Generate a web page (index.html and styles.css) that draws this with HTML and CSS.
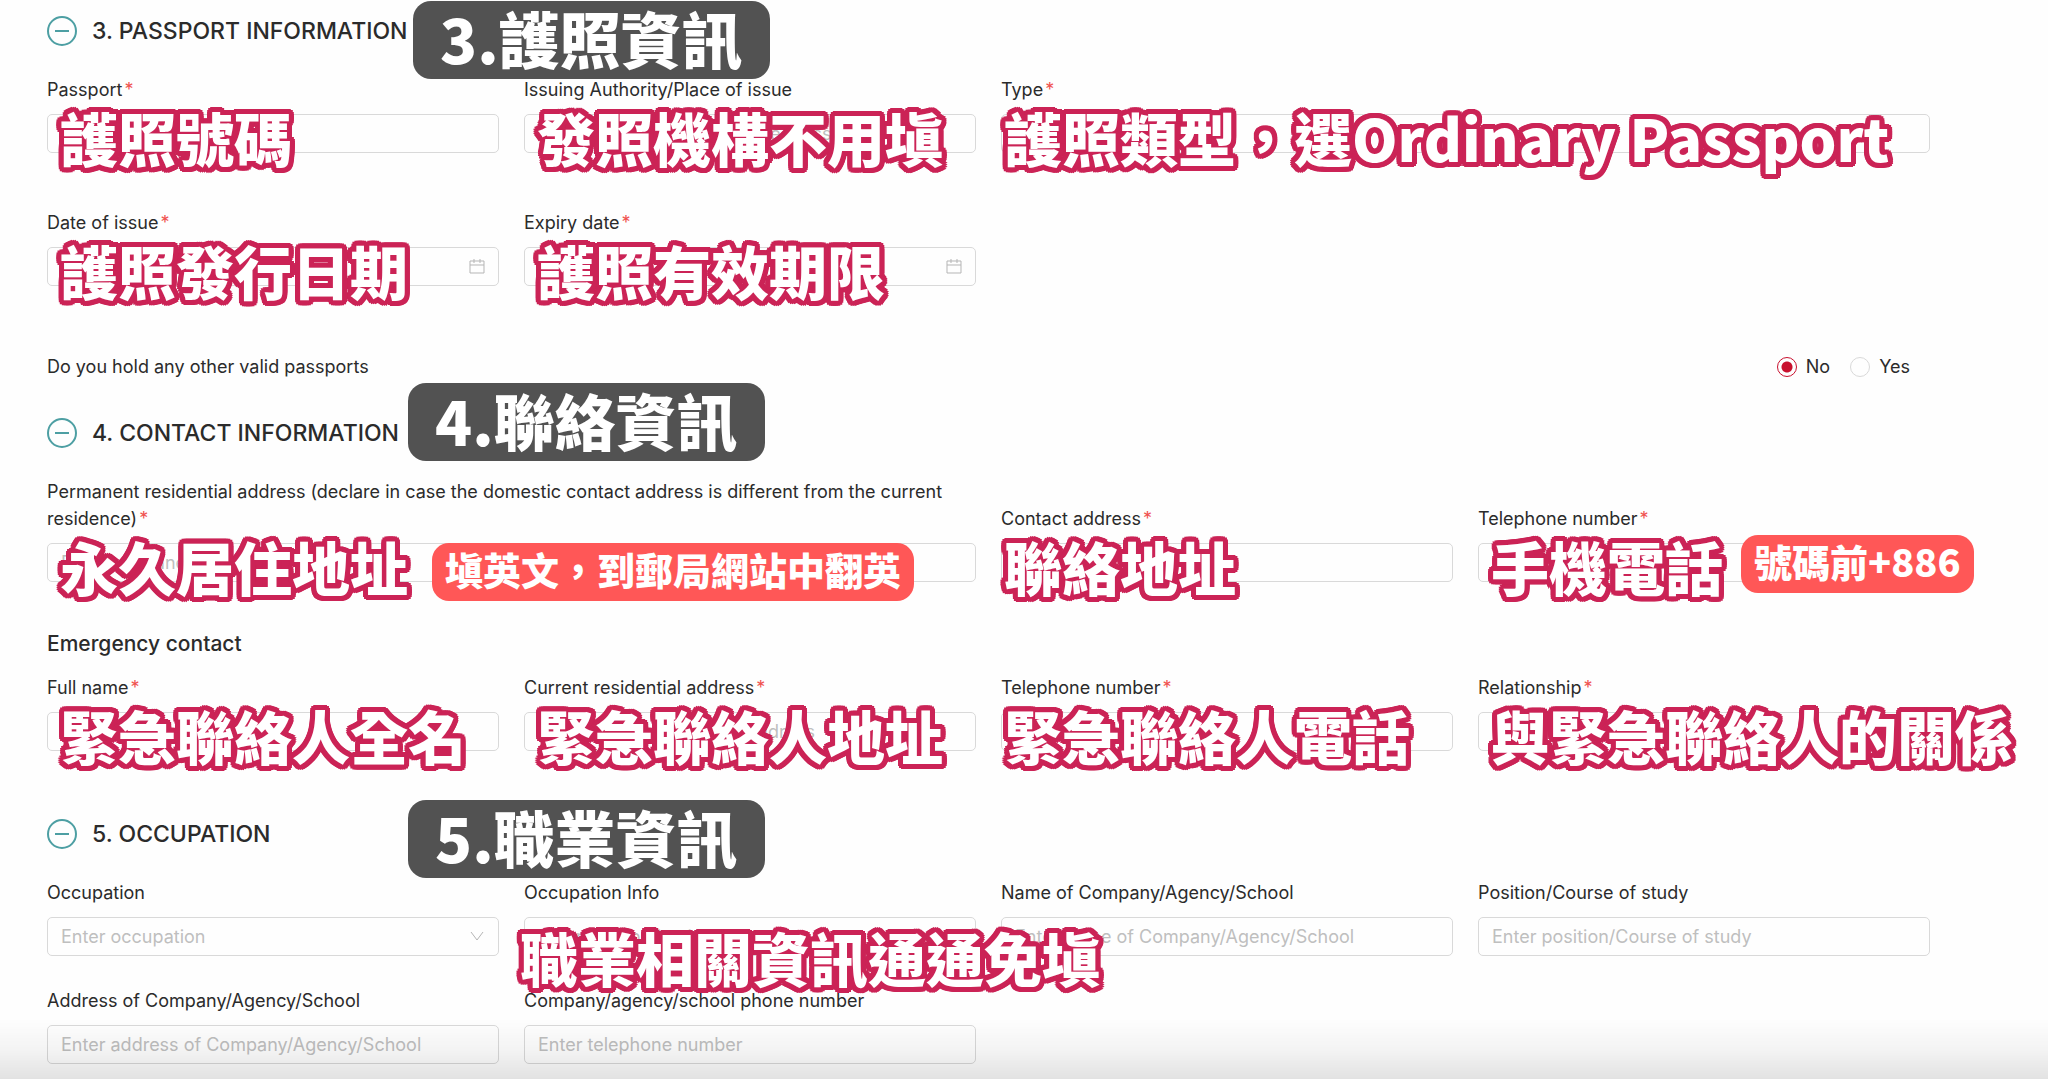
FILE: index.html
```
<!DOCTYPE html>
<html lang="en">
<head>
    <meta charset="UTF-8">
    <meta name="viewport" content="width=device-width, initial-scale=1.0">
    <title>Passport, contact and occupation</title>
    <link rel="stylesheet" href="styles.css">
</head>
<body>
    <form class="form">
        <!-- 3. Passport -->
        <section class="section">
            <div class="section-head">
                <button type="button" class="toggle" aria-label="Collapse passport information">
                    <svg viewBox="0 0 30 30"><circle cx="15" cy="15" r="14"/><path d="M8 15h14"/></svg>
                </button>
                <h2>3. PASSPORT INFORMATION</h2>
                <span class="badge badge-passport" lang="zh-Hant">3.護照資訊</span>
            </div>
            <div class="grid grid-loose">
                <div class="field">
                    <label for="passport">Passport<i>*</i></label>
                    <div class="control">
                        <input type="text" id="passport">
                        <span class="note" lang="zh-Hant">護照號碼</span>
                    </div>
                </div>
                <div class="field">
                    <label for="authority">Issuing Authority/Place of issue</label>
                    <div class="control">
                        <input type="text" id="authority" placeholder="Enter issuing authority/Place of issue">
                        <span class="note" lang="zh-Hant">發照機構不用塡</span>
                    </div>
                </div>
                <div class="field wide">
                    <label for="type">Type<i>*</i></label>
                    <div class="control">
                        <input type="text" id="type">
                        <span class="note note-left" lang="zh-Hant">護照類型，選Ordinary Passport</span>
                    </div>
                </div>
                <div class="field">
                    <label for="issued">Date of issue<i>*</i></label>
                    <div class="control">
                        <input type="text" id="issued">
                        <svg class="icon" viewBox="0 0 16 16"><path d="M1 3h14v12H1zM1 7h14M5 1v4M11 1v4"/></svg>
                        <span class="note" lang="zh-Hant">護照發行日期</span>
                    </div>
                </div>
                <div class="field">
                    <label for="expiry">Expiry date<i>*</i></label>
                    <div class="control">
                        <input type="text" id="expiry">
                        <svg class="icon" viewBox="0 0 16 16"><path d="M1 3h14v12H1zM1 7h14M5 1v4M11 1v4"/></svg>
                        <span class="note" lang="zh-Hant">護照有效期限</span>
                    </div>
                </div>
            </div>
            <div class="question" role="radiogroup" aria-labelledby="other-passports">
                <span id="other-passports">Do you hold any other valid passports</span>
                <div class="choices">
                    <label><input type="radio" name="other" checked>No</label>
                    <label><input type="radio" name="other">Yes</label>
                </div>
            </div>
        </section>

        <!-- 4. Contact -->
        <section class="section section-contact">
            <div class="section-head">
                <button type="button" class="toggle" aria-label="Collapse contact information">
                    <svg viewBox="0 0 30 30"><circle cx="15" cy="15" r="14"/><path d="M8 15h14"/></svg>
                </button>
                <h2>4. CONTACT INFORMATION</h2>
                <span class="badge badge-contact" lang="zh-Hant">4.聯絡資訊</span>
            </div>
            <div class="grid">
                <div class="field wide">
                    <label for="address">Permanent residential address (declare in case the domestic contact address is different from the current residence)<i>*</i></label>
                    <div class="control">
                        <input type="text" id="address" placeholder="Enter permanent address">
                        <span class="note" lang="zh-Hant">永久居住地址</span>
                        <span class="tip tip-address" lang="zh-Hant">塡英文，到郵局網站中翻英</span>
                    </div>
                </div>
                <div class="field">
                    <label for="contact">Contact address<i>*</i></label>
                    <div class="control">
                        <input type="text" id="contact">
                        <span class="note note-left" lang="zh-Hant">聯絡地址</span>
                    </div>
                </div>
                <div class="field">
                    <label for="phone">Telephone number<i>*</i></label>
                    <div class="control">
                        <input type="tel" id="phone">
                        <span class="note" lang="zh-Hant">手機電話</span>
                        <span class="tip tip-phone" lang="zh-Hant">號碼前+886</span>
                    </div>
                </div>
            </div>
            <h3>Emergency contact</h3>
            <div class="grid">
                <div class="field">
                    <label for="em-name">Full name<i>*</i></label>
                    <div class="control">
                        <input type="text" id="em-name">
                        <span class="note" lang="zh-Hant">緊急聯絡人全名</span>
                    </div>
                </div>
                <div class="field">
                    <label for="em-address">Current residential address<i>*</i></label>
                    <div class="control">
                        <input type="text" id="em-address" placeholder="Enter current residential address">
                        <span class="note" lang="zh-Hant">緊急聯絡人地址</span>
                    </div>
                </div>
                <div class="field">
                    <label for="em-phone">Telephone number<i>*</i></label>
                    <div class="control">
                        <input type="tel" id="em-phone">
                        <span class="note note-left" lang="zh-Hant">緊急聯絡人電話</span>
                    </div>
                </div>
                <div class="field">
                    <label for="em-relation">Relationship<i>*</i></label>
                    <div class="control">
                        <input type="text" id="em-relation">
                        <span class="note" lang="zh-Hant">與緊急聯絡人的關係</span>
                    </div>
                </div>
            </div>
        </section>

        <!-- 5. Occupation -->
        <section class="section section-occupation">
            <div class="section-head">
                <button type="button" class="toggle" aria-label="Collapse occupation">
                    <svg viewBox="0 0 30 30"><circle cx="15" cy="15" r="14"/><path d="M8 15h14"/></svg>
                </button>
                <h2>5. OCCUPATION</h2>
                <span class="badge badge-occupation" lang="zh-Hant">5.職業資訊</span>
            </div>
            <div class="grid">
                <div class="field">
                    <label for="occupation">Occupation</label>
                    <div class="control">
                        <select id="occupation"><option>Enter occupation</option></select>
                        <svg class="icon" viewBox="0 0 16 16"><path d="M2 4l6 8 6-8"/></svg>
                    </div>
                </div>
                <div class="field">
                    <label for="occupation-info">Occupation Info</label>
                    <div class="control">
                        <input type="text" id="occupation-info" placeholder="Enter occupation info">
                        <span class="note note-occupation" lang="zh-Hant">職業相關資訊通通免塡</span>
                    </div>
                </div>
                <div class="field">
                    <label for="company">Name of Company/Agency/School</label>
                    <div class="control">
                        <input type="text" id="company" placeholder="Enter name of Company/Agency/School">
                    </div>
                </div>
                <div class="field">
                    <label for="position">Position/Course of study</label>
                    <div class="control">
                        <input type="text" id="position" placeholder="Enter position/Course of study">
                    </div>
                </div>
                <div class="field">
                    <label for="company-address">Address of Company/Agency/School</label>
                    <div class="control">
                        <input type="text" id="company-address" placeholder="Enter address of Company/Agency/School">
                    </div>
                </div>
                <div class="field">
                    <label for="company-phone">Company/agency/school phone number</label>
                    <div class="control">
                        <input type="tel" id="company-phone" placeholder="Enter telephone number">
                    </div>
                </div>
            </div>
        </section>
    </form>
    <div class="shade"></div>
</body>
</html>
```
FILE: styles.css
```
* {
    box-sizing: border-box;
}

body {
    margin: 0;
    background: #fefefe;
    color: #2b2b2b;
    font-family: Inter, "Noto Sans CJK TC", sans-serif;
    font-size: 18px;
    line-height: 27px;
    overflow-x: hidden;
}

.form {
    padding: 16px 118px 18px 47px;
}

/* Section titles */
.section-head {
    position: relative;
    display: flex;
    align-items: center;
    gap: 15px;
    height: 30px;
    margin-bottom: 30px;
}

.section-contact {
    margin-top: 38px;
}

.section-occupation {
    margin-top: 68px;
}

h2 {
    margin: 0;
    font-size: 23px;
    font-weight: 500;
}

h3 {
    margin: 48px 0 17px;
    font-size: 21px;
    font-weight: 500;
    line-height: 27px;
}

.toggle {
    width: 30px;
    height: 30px;
    padding: 0;
    border: 0;
    background: none;
}

.toggle svg {
    display: block;
    fill: none;
    stroke: #4d9fa3;
    stroke-width: 2;
}

/* Fields */
.grid {
    display: grid;
    grid-template-columns: repeat(4, 1fr);
    align-items: end;
    gap: 31px 25px;
}

.grid-loose {
    row-gap: 56px;
}

.wide {
    grid-column: span 2;
}

.field label {
    display: block;
    margin-bottom: 11px;
}

.field i {
    margin-left: 2px;
    color: #f0524f;
    font-style: normal;
}

.control {
    position: relative;
}

.control input,
.control select {
    display: block;
    width: 100%;
    height: 39px;
    padding: 0 13px;
    border: 1px solid #d9d9d9;
    border-radius: 5px;
    background: transparent;
    color: #2b2b2b;
    font: inherit;
    appearance: none;
}

.control select,
.control input::placeholder {
    color: #bfbfbf;
    opacity: 1;
}

.icon {
    position: absolute;
    top: 11px;
    right: 14px;
    width: 16px;
    height: 16px;
    fill: none;
    stroke: #b5b5b5;
}

.question {
    display: flex;
    justify-content: space-between;
    margin-top: 67px;
    padding-right: 20px;
}

.choices {
    display: flex;
    gap: 20px;
}

.choices label {
    display: flex;
    align-items: center;
    gap: 9px;
}

.choices input {
    width: 20px;
    height: 20px;
    margin: 0;
    border: 1px solid #d9d9d9;
    border-radius: 50%;
    appearance: none;
}

.choices input:checked {
    border-color: #c8102e;
    background: radial-gradient(circle, #c8102e 5px, transparent 6px);
}

/* Chinese hints over the fields */
.note,
.badge,
.tip {
    position: absolute;
    color: #fff;
    font-family: "Noto Sans CJK TC", sans-serif;
    font-weight: 900;
    white-space: nowrap;
    pointer-events: none;
}

/* The ring of shadows gives an outline with round corners */
.note {
    top: -6px;
    left: 13px;
    z-index: 1;
    font-size: 58px;
    line-height: 58px;
    text-shadow:
        5px 0 #cb2356, -5px 0 #cb2356, 0 5px #cb2356, 0 -5px #cb2356,
        5px 2px #cb2356, 5px -2px #cb2356, -5px 2px #cb2356, -5px -2px #cb2356,
        2px 5px #cb2356, 2px -5px #cb2356, -2px 5px #cb2356, -2px -5px #cb2356,
        4px 4px #cb2356, 4px -4px #cb2356, -4px 4px #cb2356, -4px -4px #cb2356,
        3px 0 #cb2356, -3px 0 #cb2356, 0 3px #cb2356, 0 -3px #cb2356;
}

.note-left {
    left: 3px;
}

.note-occupation {
    top: 11px;
    left: -4px;
}

.badge {
    left: 361px;
    height: 78px;
    padding: 0 27px;
    border-radius: 18px;
    background: #525252;
    font-size: 61px;
    line-height: 74px;
}

.badge-passport {
    top: -15px;
    left: 366px;
}

.badge-contact {
    top: -35px;
}

.badge-occupation {
    top: -19px;
}

.tip {
    z-index: 1;
    height: 58px;
    padding: 0 13px;
    border-radius: 17px;
    background: #ff5757;
    font-size: 38px;
    line-height: 52px;
}

.tip-address {
    top: 0;
    left: 385px;
}

.tip-phone {
    top: -8px;
    left: 263px;
}

/* Fade along the bottom of the window */
.shade {
    position: fixed;
    right: 0;
    bottom: 0;
    left: 0;
    height: 60px;
    background: linear-gradient(transparent, rgba(0, 0, 0, 0.04) 50%, rgba(0, 0, 0, 0.11));
    pointer-events: none;
}
```
